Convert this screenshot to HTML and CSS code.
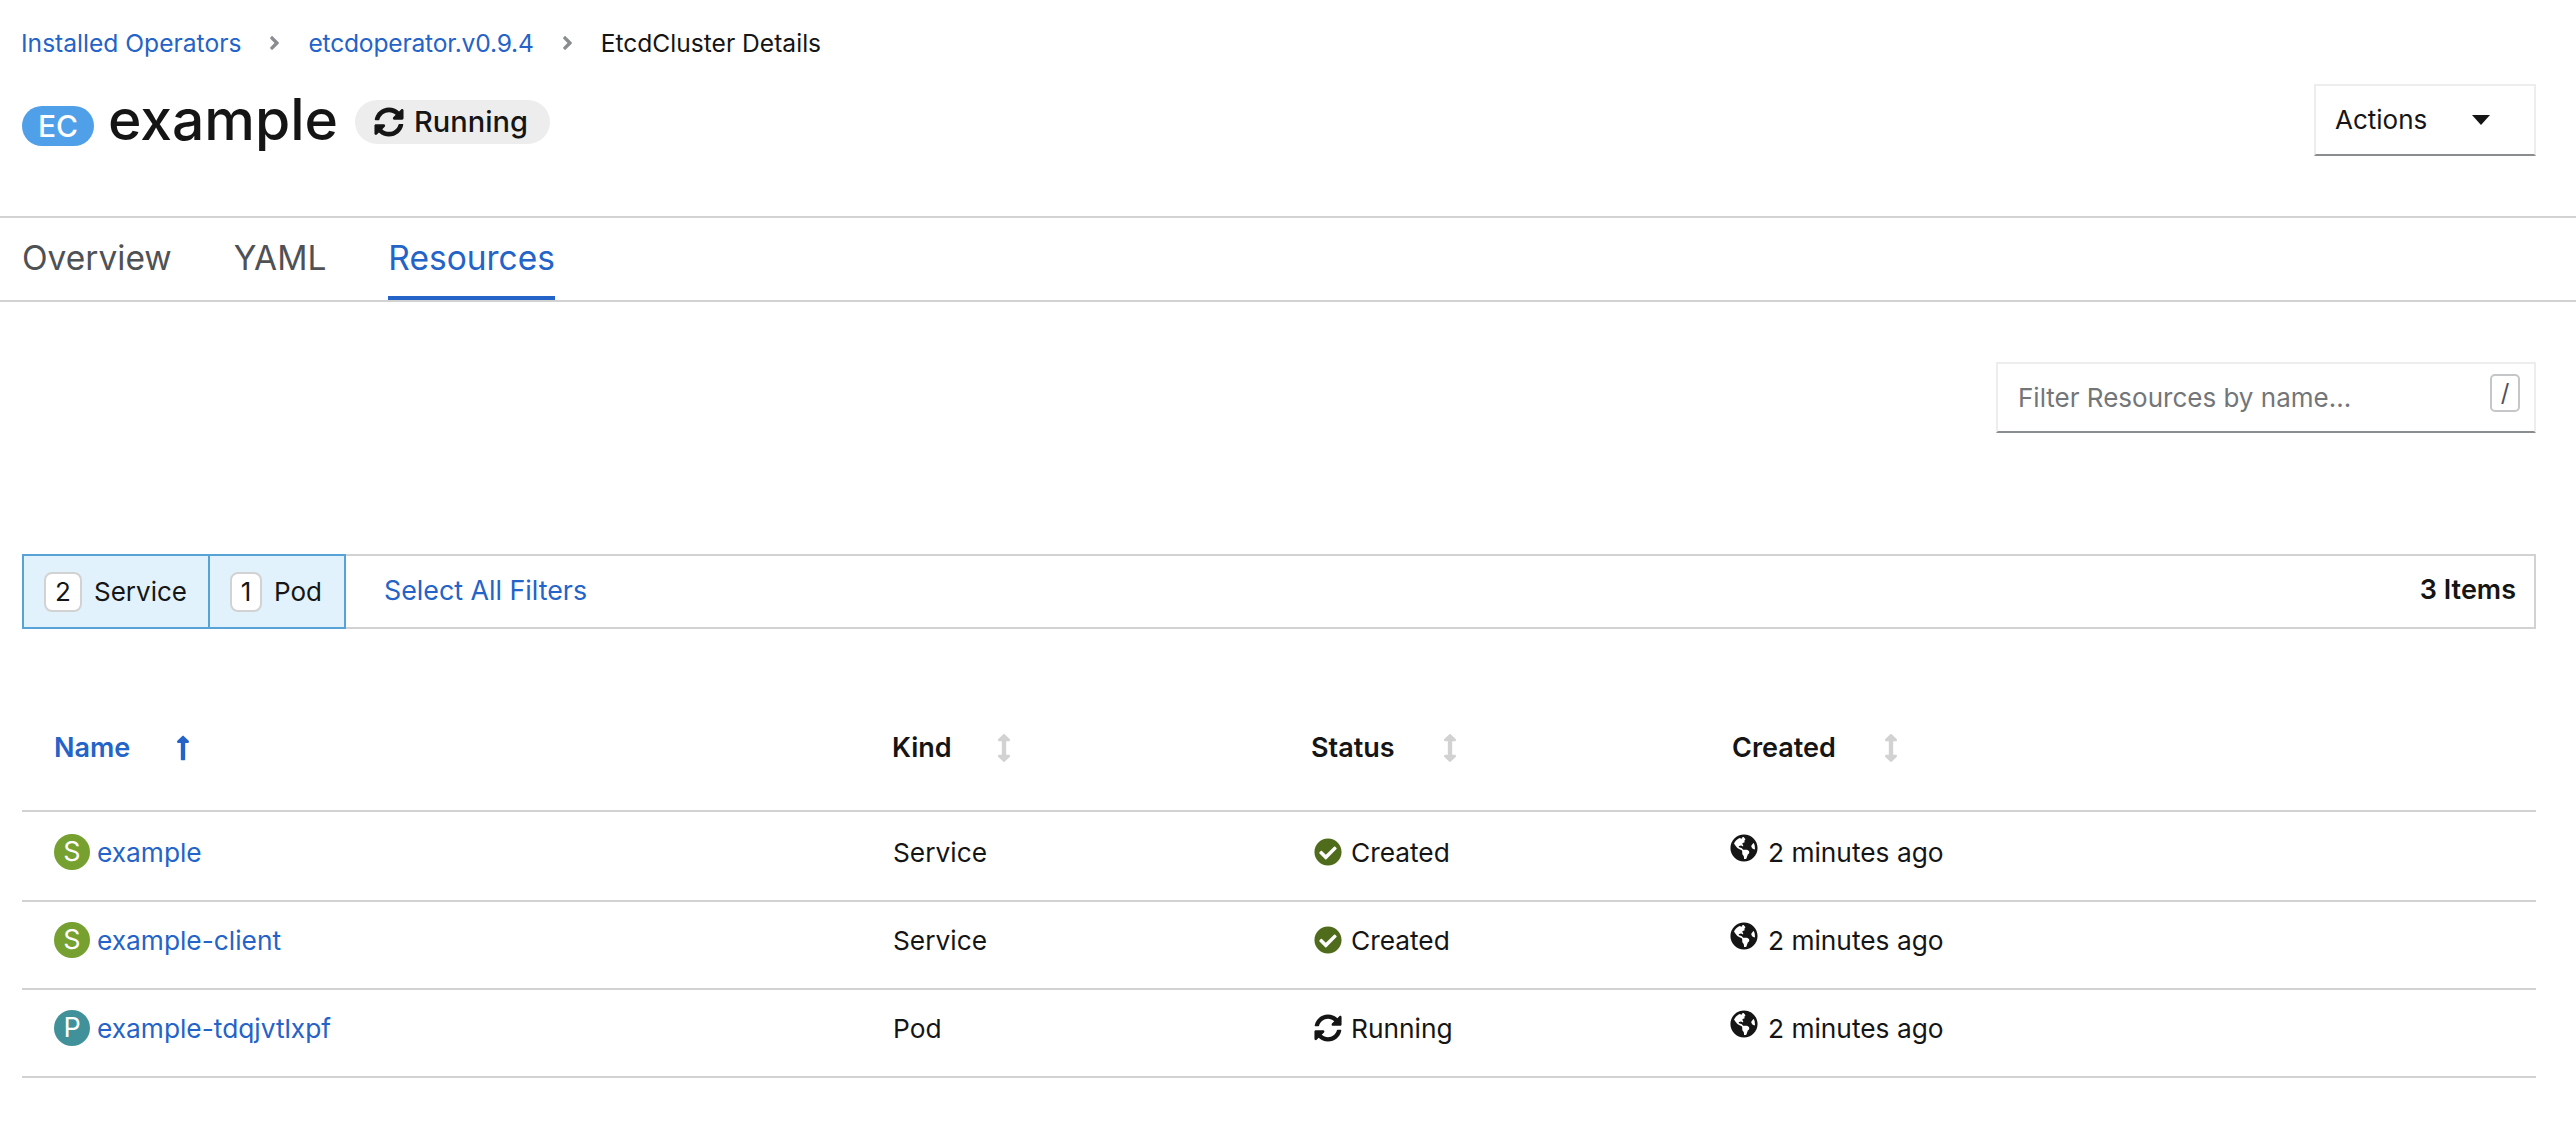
FILE: index.html
```html
<!DOCTYPE html>
<html lang="en">
<head>
<meta charset="utf-8">
<title>EtcdCluster Details</title>
<link rel="stylesheet" href="styles.css">
</head>
<body>
<svg class="defs" width="0" height="0" aria-hidden="true">
  <symbol id="i-sync" viewBox="0 0 512 512"><path d="M370.72 133.28C339.458 104.008 298.888 87.962 255.848 88c-77.458.068-144.328 53.178-162.791 126.85-1.344 5.363-6.122 9.15-11.651 9.15H24.103c-7.498 0-13.194-6.807-11.807-14.176C33.933 94.924 134.813 8 256 8c66.448 0 126.791 26.136 171.315 68.685L463.03 40.97C478.149 25.851 504 36.559 504 57.941V192c0 13.255-10.745 24-24 24H345.941c-21.382 0-32.09-25.851-16.971-40.971l41.75-41.749zM32 296h134.059c21.382 0 32.09 25.851 16.971 40.971l-41.75 41.75c31.262 29.273 71.835 45.319 114.876 45.28 77.418-.07 144.315-53.144 162.787-126.849 1.344-5.363 6.122-9.15 11.651-9.15h57.304c7.498 0 13.194 6.807 11.807 14.176C478.067 417.076 377.187 504 256 504c-66.448 0-126.791-26.136-171.315-68.685L48.97 471.03C33.851 486.149 8 475.441 8 454.059V320c0-13.255 10.745-24 24-24z"/></symbol>
  <symbol id="i-check" viewBox="0 0 512 512"><path d="M504 256c0 136.967-111.033 248-248 248S8 392.967 8 256 119.033 8 256 8s248 111.033 248 248zM227.314 387.314l184-184c6.248-6.248 6.248-16.379 0-22.627l-22.627-22.627c-6.248-6.249-16.379-6.249-22.628 0L216 308.118l-70.059-70.059c-6.248-6.248-16.379-6.248-22.628 0l-22.627 22.627c-6.248 6.248-6.248 16.379 0 22.627l104 104c6.249 6.249 16.379 6.249 22.628.001z"/></symbol>
  <symbol id="i-globe" viewBox="0 0 496 512"><path d="M248 8C111.03 8 0 119.03 0 256s111.03 248 248 248 248-111.03 248-248S384.97 8 248 8zm82.29 357.6c-3.9 3.88-7.99 7.95-11.31 11.28-2.99 3-5.1 6.7-6.17 10.71-1.51 5.66-2.73 11.38-4.77 16.87l-17.39 46.85c-13.76 3-28 4.69-42.65 4.69v-27.38c1.69-12.62-7.64-36.26-22.63-51.25-6-6-9.37-14.14-9.37-22.63v-32.01c0-11.64-6.27-22.34-16.46-27.97-14.37-7.95-34.81-19.06-48.81-26.11-11.48-5.78-22.1-13.14-31.65-21.75l-.8-.72a114.792 114.792 0 0 1-18.06-20.74c-9.38-13.77-24.66-36.42-34.59-51.14 20.47-45.5 57.36-82.04 103.2-101.89l24.01 12.01C203.48 89.74 216 82.01 216 70.11v-11.3c7.99-1.29 16.12-2.11 24.39-2.42l28.3 28.3c6.25 6.25 6.25 16.38 0 22.63L264 112l-10.34 10.34c-3.12 3.12-3.12 8.19 0 11.31l4.69 4.69c3.12 3.12 3.12 8.19 0 11.31l-8 8a8.008 8.008 0 0 1-5.66 2.34h-8.99c-2.08 0-4.08.81-5.58 2.27l-9.92 9.65a8.008 8.008 0 0 0-1.58 9.31l15.59 31.19c2.66 5.32-1.21 11.58-7.15 11.58h-5.64c-1.93 0-3.79-.7-5.24-1.96l-9.28-8.06a16.017 16.017 0 0 0-15.55-3.1l-31.17 10.39a11.95 11.95 0 0 0-8.17 11.34c0 4.53 2.56 8.66 6.61 10.69l11.08 5.54c9.41 4.71 19.79 7.16 30.31 7.16s22.59 27.29 32 32h66.75c8.49 0 16.62 3.37 22.63 9.37l13.69 13.69a30.503 30.503 0 0 1 8.93 21.57 46.536 46.536 0 0 1-13.72 32.98zM417 274.25c-5.79-1.45-10.84-5-14.15-9.97l-17.98-26.97a23.97 23.97 0 0 1 0-26.62l19.59-29.38c2.32-3.47 5.5-6.29 9.24-8.15l12.98-6.49C440.2 193.59 448 223.87 448 256c0 8.67-.74 17.16-1.82 25.54L417 274.25z"/></symbol>
  <symbol id="i-up" viewBox="0 0 256 512"><path d="M88 166.059V468c0 6.627 5.373 12 12 12h56c6.627 0 12-5.373 12-12V166.059h46.059c21.382 0 32.09-25.851 16.971-40.971l-86.059-86.059c-9.373-9.373-24.569-9.373-33.941 0l-86.059 86.059c-15.119 15.119-4.411 40.971 16.971 40.971H88z"/></symbol>
  <symbol id="i-updown" viewBox="0 0 256 512"><path d="M214.059 377.941H168V134.059h46.059c21.382 0 32.09-25.851 16.971-40.971L144.971 7.029c-9.373-9.373-24.569-9.373-33.941 0L24.971 93.088c-15.119 15.119-4.411 40.971 16.971 40.971H88v243.882H41.941c-21.382 0-32.09 25.851-16.971 40.971l86.059 86.059c9.373 9.373 24.569 9.373 33.941 0l86.059-86.059c15.12-15.119 4.412-40.971-16.97-40.971z"/></symbol>
  <symbol id="i-angle" viewBox="0 0 256 512"><path d="M224.3 273l-136 136c-9.4 9.4-24.6 9.4-33.9 0l-22.6-22.6c-9.4-9.4-9.4-24.6 0-33.9l96.4-96.4-96.4-96.4c-9.4-9.4-9.4-24.6 0-33.9L54.3 103c9.4-9.4 24.6-9.4 33.9 0l136 136c9.5 9.4 9.5 24.6.1 34z"/></symbol>
</svg>

<nav class="breadcrumb">
  <a class="link" href="#">Installed Operators</a>
  <svg class="crumb-sep"><use href="#i-angle"/></svg>
  <a class="link crumb-tight" href="#">etcdoperator.v0.9.4</a>
  <svg class="crumb-sep"><use href="#i-angle"/></svg>
  <span>EtcdCluster Details</span>
</nav>

<header class="page-head">
  <div class="title-group">
    <span class="res-badge">EC</span>
    <h1 class="title">example</h1>
    <span class="status-pill"><svg class="pill-icon"><use href="#i-sync"/></svg>Running</span>
  </div>
  <button class="actions" type="button">Actions<span class="caret"></span></button>
</header>

<nav class="tabs">
  <a class="tab" href="#">Overview</a>
  <a class="tab" href="#">YAML</a>
  <a class="tab tab-active" href="#">Resources</a>
</nav>

<div class="filter-row">
  <div class="filter-box">
    <span class="placeholder">Filter Resources by name...</span>
    <span class="kbd">/</span>
  </div>
</div>

<div class="chip-bar">
  <button class="chip" type="button"><span class="count">2</span>Service</button>
  <button class="chip chip-next" type="button"><span class="count count-narrow">1</span>Pod</button>
  <a class="link select-all" href="#">Select All Filters</a>
  <span class="items">3 Items</span>
</div>

<section class="table">
  <div class="tr th-row">
    <div class="th th-active">Name<svg class="sort sort-up"><use href="#i-up"/></svg></div>
    <div class="th th-kind">Kind<svg class="sort"><use href="#i-updown"/></svg></div>
    <div class="th">Status<svg class="sort"><use href="#i-updown"/></svg></div>
    <div class="th th-created">Created<svg class="sort"><use href="#i-updown"/></svg></div>
  </div>
  <div class="tr row row-first">
    <div class="td"><span class="res res-s">S</span><a class="link" href="#">example</a></div>
    <div class="td td-kind">Service</div>
    <div class="td"><svg class="ic ic-ok"><use href="#i-check"/></svg>Created</div>
    <div class="td"><svg class="ic ic-globe"><use href="#i-globe"/></svg>2 minutes ago</div>
  </div>
  <div class="tr row">
    <div class="td"><span class="res res-s">S</span><a class="link" href="#">example-client</a></div>
    <div class="td td-kind">Service</div>
    <div class="td"><svg class="ic ic-ok"><use href="#i-check"/></svg>Created</div>
    <div class="td"><svg class="ic ic-globe"><use href="#i-globe"/></svg>2 minutes ago</div>
  </div>
  <div class="tr row">
    <div class="td"><span class="res res-p">P</span><a class="link" href="#">example-tdqjvtlxpf</a></div>
    <div class="td td-kind">Pod</div>
    <div class="td"><svg class="ic"><use href="#i-sync"/></svg>Running</div>
    <div class="td"><svg class="ic ic-globe"><use href="#i-globe"/></svg>2 minutes ago</div>
  </div>
</section>
</body>
</html>
```

FILE: styles.css
```css
* { box-sizing: border-box; }
html, body { margin: 0; padding: 0; background: #fff; }
body {
  font-family: Inter, "Noto Sans", sans-serif;
  font-size: 26px;
  line-height: 36px;
  color: #151515;
  overflow: hidden;
}
.defs { position: absolute; }
svg { fill: currentColor; display: block; flex: none; }
a { text-decoration: none; }
button { font: inherit; color: inherit; background: none; cursor: pointer; }
.link { color: #2463c7; }

.breadcrumb {
  height: 86px;
  padding: 0 21px;
  display: flex;
  align-items: center;
  font-size: 24.6px;
}
.crumb-sep { width: 11px; height: 22px; margin: 0 28px; color: #8a8d90; }
.crumb-tight { letter-spacing: -0.2px; }

.page-head {
  height: 130px;
  padding: 0 40px 0 22px;
  display: flex;
  justify-content: space-between;
  align-items: flex-start;
}
.title-group { display: flex; align-items: flex-start; height: 84px; }
.res-badge {
  width: 72px; height: 40px;
  margin-top: 20px;
  border-radius: 20px;
  background: #4f9fe9;
  color: #fff;
  font-size: 30px;
  font-weight: 500;
  line-height: 40px;
  text-align: center;
}
.title {
  margin: -2px 0 0 14px;
  font-size: 57px;
  line-height: 72px;
  font-weight: 500;
  letter-spacing: 0;
}
.status-pill {
  margin: 14px 0 0 17px;
  width: 195px; height: 44px;
  padding-left: 19px;
  display: flex; align-items: center; gap: 10px;
  background: #ededed;
  border-radius: 22px;
  font-size: 29px;
  font-weight: 500;
}
.pill-icon { width: 30px; height: 30px; }
.actions {
  width: 222px; height: 72px;
  margin-top: -2px;
  padding: 0 0 0 19px;
  display: flex; align-items: center;
  border: 2px solid #ededed;
  border-bottom-color: #8a8d90;
  font-size: 26px;
}
.caret {
  margin-left: 45px;
  border-left: 9px solid transparent;
  border-right: 9px solid transparent;
  border-top: 10px solid #151515;
}

.tabs {
  height: 86px;
  padding: 0 22px;
  display: flex;
  gap: 62px;
  border-top: 2px solid #d2d2d2;
  border-bottom: 2px solid #d2d2d2;
}
.tab {
  height: 82px;
  padding-top: 20px;
  font-size: 33.5px;
  line-height: 40px;
  color: #4f5255;
}
.tab-active { color: #2463c7; border-bottom: 4px solid #2463c7; }

.filter-row { margin-top: 60px; padding-right: 40px; display: flex; justify-content: flex-end; }
.filter-box {
  width: 540px; height: 71px;
  padding: 0 14px 0 20px;
  display: flex; align-items: center; justify-content: space-between;
  border: 2px solid #ededed;
  border-bottom-color: #8a8d90;
  color: #737679;
}
.kbd {
  width: 30px; height: 38px;
  margin-top: -10px;
  border: 2px solid #c4c6c8;
  border-radius: 5px;
  font-size: 24px;
  line-height: 34px;
  text-align: center;
  color: #4f5255;
}

.chip-bar {
  margin: 121px 40px 0 22px;
  height: 75px;
  display: flex; align-items: stretch;
  border: 2px solid #d2d2d2;
  border-left: 0;
}
.chip {
  margin: -2px 0;
  display: flex; align-items: center;
  height: 75px;
  padding: 0 21px 0 20px;
  gap: 12px;
  background: #e2f2fc;
  border: 2px solid #57a3d8;
  font-size: 26px;
}
.chip-next { margin-left: -2px; padding-right: 22px; }
.count {
  width: 38px; height: 40px;
  border: 2px solid #d2d2d2;
  border-radius: 8px;
  background: #fff;
  line-height: 36px;
  text-align: center;
}
.count-narrow { width: 32px; }
.select-all { margin-left: 38px; align-self: center; margin-top: -4px; font-size: 26.8px; }
.items { margin-left: auto; margin-right: 18px; align-self: center; font-weight: 600; font-size: 27px; margin-top: -4px; }

.table { margin: 64px 0 0 22px; width: 2514px; }
.tr {
  display: grid;
  grid-template-columns: 2fr 1fr 1fr 2fr;
  border-bottom: 2px solid #d2d2d2;
}
.th-row { height: 119px; }
.th {
  padding: 37px 0 0 32px;
  display: flex; align-items: center;
  height: 73px;
  font-weight: 600;
  font-size: 27px;
}
.th-active { color: #2463c7; }
.th-created { padding-left: 34px; }
.sort { width: 14px; height: 28px; margin-left: 48px; color: #d2d2d2; }
.th-kind .sort { margin-left: 45px; }
.sort-up { color: #2463c7; margin-left: 46px; }

.row { height: 88px; font-size: 26.3px; line-height: 38px; }
.row-first { height: 90px; padding-top: 2px; }
.td {
  padding: 20px 0 0 32px;
  display: flex; align-items: flex-start;
}
.td-kind { padding-left: 33px; }
.res {
  width: 36px; height: 36px;
  margin-right: 7px;
  border-radius: 50%;
  color: #fff;
  font-size: 27px;
  line-height: 36px;
  text-align: center;
}
.res-s { background: #76a030; }
.res-p { background: #41919a; }
.ic { width: 28px; height: 28px; margin: 4px 9px 0 3px; }
.ic-ok { color: #4f6b1c; }
.ic-globe { margin: 0 10px 0 0; }
```
